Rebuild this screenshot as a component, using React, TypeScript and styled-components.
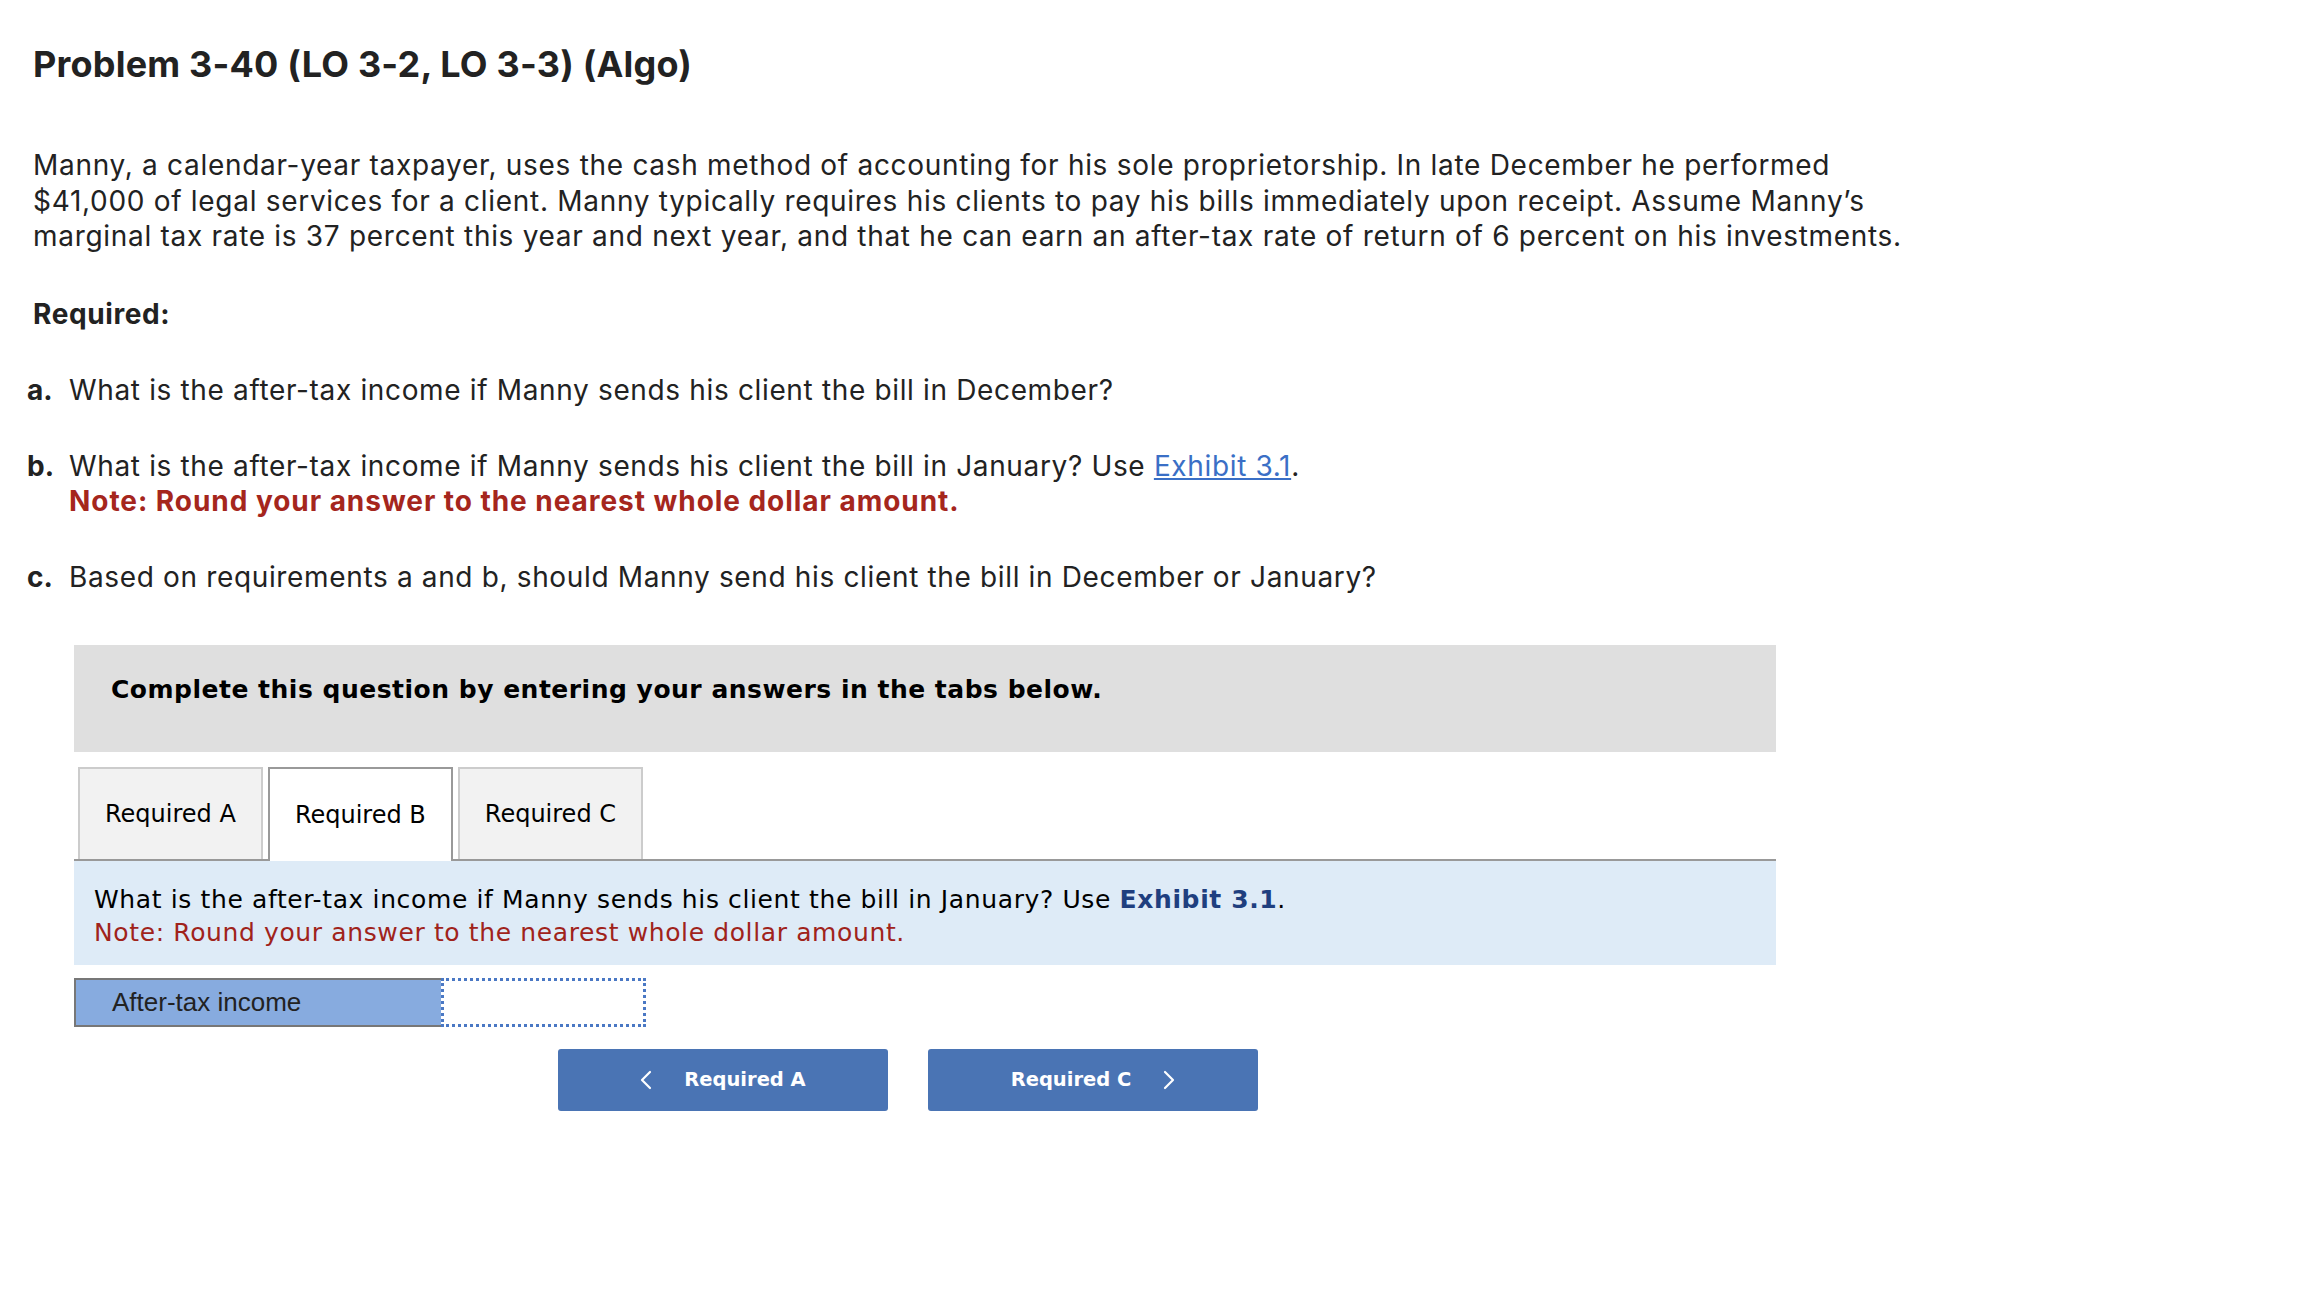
import React from 'react';
import styled, {createGlobalStyle} from "styled-components";

const GlobalStyle = createGlobalStyle`
    body {
        margin: 0;
        background: #fff;
    }
`

const tabs = ["Required A", "Required B", "Required C"]

const Chevron = ({dir}: { dir: "left" | "right" }) => (
    <svg width="12" height="20" viewBox="0 0 12 20" fill="none">
        <polyline
            points={dir === "left" ? "10,2 2,10 10,18" : "2,2 10,10 2,18"}
            stroke="#fff"
            strokeWidth="2.2"
            strokeLinecap="round"
            strokeLinejoin="round"
        />
    </svg>
)

export default function App() {
    return (
        <Page>
            <GlobalStyle/>
            <Title>Problem 3-40 (LO 3-2, LO 3-3) (Algo)</Title>
            <Intro>
                Manny, a calendar-year taxpayer, uses the cash method of accounting for his sole proprietorship. In late
                December he performed $41,000 of legal services for a client. Manny typically requires his clients to
                pay his bills immediately upon receipt. Assume Manny’s marginal tax rate is 37 percent this year and
                next year, and that he can earn an after-tax rate of return of 6 percent on his investments.
            </Intro>
            <RequiredTitle>Required:</RequiredTitle>
            <Item>
                <Marker>a.</Marker>
                <div>What is the after-tax income if Manny sends his client the bill in December?</div>
            </Item>
            <Item>
                <Marker>b.</Marker>
                <div>
                    What is the after-tax income if Manny sends his client the bill in January? Use <Link>Exhibit 3.1</Link>.
                    <Note>Note: Round your answer to the nearest whole dollar amount.</Note>
                </div>
            </Item>
            <Item>
                <Marker>c.</Marker>
                <div>Based on requirements a and b, should Manny send his client the bill in December or January?</div>
            </Item>

            <Widget>
                <Instructions>Complete this question by entering your answers in the tabs below.</Instructions>
                <TabList>
                    {tabs.map(t => (
                        <Tab key={t} $active={t === "Required B"}>{t}</Tab>
                    ))}
                </TabList>
                <InfoPanel>
                    <div>What is the after-tax income if Manny sends his client the bill in January?
                        Use <PanelLink>Exhibit 3.1</PanelLink>.
                    </div>
                    <PanelNote>Note: Round your answer to the nearest whole dollar amount.</PanelNote>
                </InfoPanel>
                <AnswerRow>
                    <AnswerLabel>After-tax income</AnswerLabel>
                    <AnswerInput/>
                </AnswerRow>
                <NavRow>
                    <NavButton><Chevron dir="left"/>Required A</NavButton>
                    <NavButton>Required C<Chevron dir="right"/></NavButton>
                </NavRow>
            </Widget>
        </Page>
    );
}

const Page = styled.div`
    padding: 42px 33px 60px;
    font-family: "Inter", "Open Sans", sans-serif;
    color: #222;
`

const Title = styled.h1`
    margin: 0;
    font-size: 36px;
    line-height: 44px;
    font-weight: 700;
    letter-spacing: 0.2px;
`

const Intro = styled.p`
    margin: 62px 0 0;
    max-width: 1880px;
    font-size: 28px;
    line-height: 35.5px;
    font-weight: 400;
    letter-spacing: 0.7px;
`

const RequiredTitle = styled.h3`
    margin: 41px 0 0;
    font-size: 28px;
    line-height: 36px;
    font-weight: 700;
    letter-spacing: 0.6px;
`

const Item = styled.div`
    display: flex;
    margin: 41px 0 0 -6px;
    font-size: 28px;
    line-height: 35px;
    letter-spacing: 0.65px;
`

const Marker = styled.span`
    width: 42px;
    flex-shrink: 0;
    font-weight: 700;
    letter-spacing: 0;
`

const Link = styled.a`
    color: #3a6fc6;
    text-decoration: underline;
    cursor: pointer;
`

const Note = styled.div`
    color: #a5261d;
    font-weight: 700;
    letter-spacing: 0.95px;
`

const Widget = styled.div`
    width: 1702px;
    margin: 50px 0 0 41px;
    font-family: "DejaVu Sans", Verdana, sans-serif;
`

const Instructions = styled.div`
    background: #dfdfdf;
    padding: 28px 37px 45px;
    font-size: 25px;
    line-height: 34px;
    font-weight: 700;
    letter-spacing: 0.5px;
    color: #000;
`

const TabList = styled.div`
    display: flex;
    gap: 5px;
    margin-top: 15px;
    padding-left: 4px;
    border-bottom: 2px solid #999;
`

const Tab = styled.div<{ $active?: boolean }>`
    padding: 0 25px;
    display: flex;
    align-items: center;
    font-size: 24px;
    color: #000;
    background: ${p => p.$active ? "#fff" : "#f2f2f2"};
    border: 2px solid ${p => p.$active ? "#999" : "#ccc"};
    border-bottom: none;
    margin-bottom: ${p => p.$active ? "-2px" : "0"};
    height: ${p => p.$active ? "94px" : "92px"};
    box-sizing: border-box;
`

const InfoPanel = styled.div`
    background: #deebf7;
    padding: 22px 20px 16px;
    font-size: 25px;
    line-height: 33px;
    letter-spacing: 0.62px;
    color: #000;
`

const PanelLink = styled.span`
    color: #1f3f7f;
    font-weight: 700;
`

const PanelNote = styled.div`
    color: #a0231b;
`

const AnswerRow = styled.div`
    display: flex;
    margin-top: 13px;
    height: 49px;
`

const AnswerLabel = styled.div`
    width: 367px;
    box-sizing: border-box;
    display: flex;
    align-items: center;
    padding-left: 36px;
    background: #87abdf;
    border: 2px solid #777;
    border-right: none;
    font-family: "Liberation Sans", Arial, sans-serif;
    font-size: 26px;
    color: #222;
`

const AnswerInput = styled.div`
    width: 205px;
    box-sizing: border-box;
    border: 3px dotted #4a78c4;
    background: #fff;
`

const NavRow = styled.div`
    display: flex;
    gap: 40px;
    margin-top: 22px;
    padding-left: 484px;
`

const NavButton = styled.button`
    width: 330px;
    height: 62px;
    display: flex;
    align-items: center;
    justify-content: center;
    gap: 32px;
    border: none;
    border-radius: 3px;
    background: #4a74b4;
    color: #fff;
    font-family: "DejaVu Sans", Verdana, sans-serif;
    font-size: 19.5px;
    font-weight: 700;
    cursor: pointer;
`
